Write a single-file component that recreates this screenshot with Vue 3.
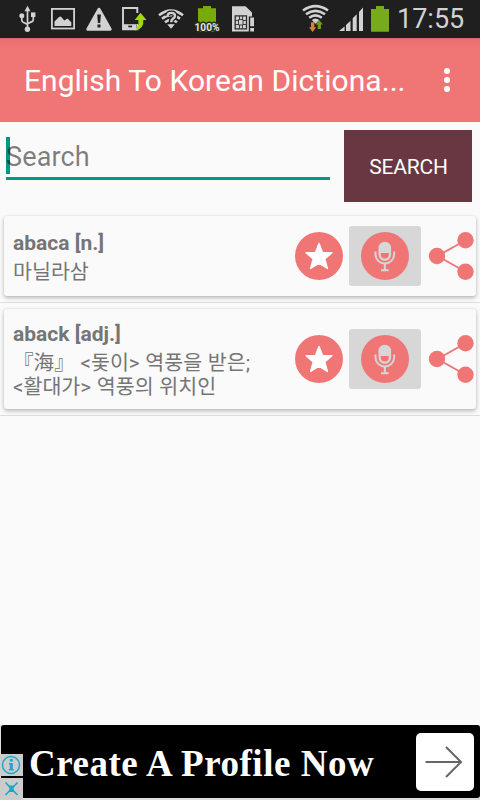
<template>
	<div class="screen">
		<header class="status">
			<div class="status-left">
				<svg width="36" height="38" viewBox="9 0 36 38">
					<g fill="none" stroke="#d2d2d2" stroke-width="1.7">
						<path d="M27.5 10v19M21.8 17v3.2q0 1.8 2 2.4l3.7 1.8M33.3 16v3.5q0 1.8-2 2.4l-3.8 1.9" />
					</g>
					<g fill="#d2d2d2">
						<path d="M27.5 5.8l3 5.4h-6z" />
						<circle cx="21.8" cy="15.8" r="2.5" />
						<rect x="31" y="12.4" width="4.4" height="4.6" />
						<circle cx="27.4" cy="29.2" r="2.7" />
					</g>
				</svg>
				<svg width="36" height="38" viewBox="45 0 36 38">
					<rect x="51.9" y="8.9" width="22.2" height="19.6" fill="none" stroke="#d2d2d2" stroke-width="1.8" />
					<path d="M54.5 26v-4.500l4.500-4.600 1.800-.5 3.500 4 3.200-2 3.800 3.800v3.800z" fill="#d2d2d2" />
				</svg>
				<svg width="36" height="38" viewBox="81 0 36 38">
					<path d="M99 9.200L110.200 29.200H87.800z" fill="#d2d2d2" stroke="#d2d2d2" stroke-width="3" stroke-linejoin="round" />
					<path d="M97.200 14.500h3.700l-.7 8.500h-2.300zM97.500 24.600h3v2.900h-3z" fill="#1f1f1f" />
				</svg>
				<svg width="36" height="38" viewBox="117 0 36 38">
					<path d="M137.300 13V8H123v21.200h14.300V24" fill="none" stroke="#d2d2d2" stroke-width="1.9" />
					<path d="M123 24.200h13v5.300h-13z" fill="#d2d2d2" />
					<path d="M128.300 25.600h3.800v1.700h-3.800z" fill="#1f1f1f" />
					<path d="M140.500 12.800l6 7.200h-3.200q1 9-8.500 10.800 4.600-3.800 3.500-10.800h-3.600z" fill="#a1d900" />
				</svg>
				<svg width="36" height="38" viewBox="153 0 36 38">
					<g fill="none" stroke="#d2d2d2" stroke-width="2.600">
						<path d="M159 15.300Q171 6 183 15.300" />
						<path d="M162 18.800Q171 11.500 180 18.800" />
						<path d="M165 22.200Q171 17.500 177 22.200" />
					</g>
					<path d="M167.200 24.200h7.600L171 28.700z" fill="#d2d2d2" />
					<path d="M167.500 16q.2-3.100 3.800-3.100 3.700 0 3.700 2.800 0 1.700-2 2.900-1.800 1.100-1.800 3.100v1" fill="none" stroke="#1f1f1f" stroke-width="4.800" />
					<path d="M167.500 16.200q.2-3.300 3.800-3.300 3.700 0 3.700 2.800 0 1.700-2 2.900-1.800 1.100-1.800 3.700M171.200 24.400v2.900" fill="none" stroke="#d2d2d2" stroke-width="2.400" />
				</svg>
				<svg width="36" height="38" viewBox="189 0 36 38">
					<path d="M203 6h8v2.300h5V31.700h-18V8.300h5z" fill="#77aa0a" />
					<text class="percent" x="207" y="31" text-anchor="middle" textLength="25" lengthAdjust="spacingAndGlyphs">100%</text>
				</svg>
				<svg width="36" height="38" viewBox="225 0 36 38">
					<path d="M232 6.200h13.500l6.500 6.300v4h-3.200v15H232z" fill="#d2d2d2" />
					<rect x="235.200" y="15.900" width="11.300" height="13" fill="none" stroke="#2e2e2e" stroke-width="1.300" />
					<path d="M238.500 19.500h4.500v5.500h-4.500zM235 20.500h3.500M235 24.500h3.500M243 20.500h3.500M243 24.500h3.500M239.500 16v3.500M242.500 16v3.500M239.500 25v3.500M242.500 25v3.500" fill="none" stroke="#2e2e2e" stroke-width=".9" />
					<path d="M250.200 17.500h3.800v8.800h-3.800zM250.200 28h3.800v3.500h-3.800z" fill="#d2d2d2" />
				</svg>
			</div>
			<div class="status-right">
				<svg width="27" height="38" viewBox="302 0 27 38">
					<g fill="none" stroke="#d2d2d2" stroke-width="2.600">
						<path d="M303 10.500Q315.500 1.800 328 10.500" />
						<path d="M306 14.300Q315.500 7.400 325 14.300" />
						<path d="M309.200 17.700Q315.500 13 321.800 17.700" />
					</g>
					<path d="M311.800 20Q315.500 17 319.200 20L315.500 23.700z" fill="#d2d2d2" />
					<path d="M311 22.200h3.300v5h1.900L312.600 32 309 27.200h2z" fill="#d58334" />
					<path d="M317.700 29h3.200v-4.500h1.900L319.300 20l-3.700 4.500h2.100z" fill="#6fa011" />
				</svg>
				<svg width="24" height="38" viewBox="338 0 24 38">
					<path d="M339 31l5.600-4.600V31zM346 25l4.500-4.300V31H346zM352.700 18.300l4-4V31h-4zM359 12l4-4.500V31h-4z" fill="#d2d2d2" />
				</svg>
				<svg width="18" height="38" viewBox="371 0 18 38">
					<path d="M376 6h8v3h5v22.700h-18V9h5z" fill="#77aa1c" />
				</svg>
				<span class="time">17:55</span>
			</div>
		</header>

		<div class="toolbar">
			<h1>English To Korean Dictiona...</h1>
			<div class="more"><i></i><i></i><i></i></div>
		</div>

		<div class="search">
			<div class="field">
				<span class="caret"></span>
				<span class="hint">Search</span>
			</div>
			<button class="submit" type="button">SEARCH</button>
		</div>

		<main class="list">
			<div v-for="entry in entries" :key="entry.word" class="row">
				<div class="card">
					<div class="entry">
						<div class="word">{{ entry.word }}</div>
						<div class="meaning">
							<div v-for="line in entry.lines" :key="line">{{ line }}</div>
						</div>
					</div>
					<svg class="star" width="48" height="48" viewBox="0 0 48 48">
						<circle cx="24" cy="24" r="24" fill="#f07676" />
						<path d="M24 11.500l3.500 8.900 9.400.3-7.200 6.200 2.700 9.500-8.400-5.300-8.400 5.300 2.700-9.500-7.200-6.200 9.400-.3z" fill="#fff" stroke="#fff" stroke-width="1.500" stroke-linejoin="round" />
					</svg>
					<div class="mic">
						<svg width="48" height="48" viewBox="0 0 48 48">
							<circle cx="24" cy="24" r="24" fill="#f07676" />
							<path d="M17.500 16a6.300 6.300 0 0 1 12.600 0v6.500a6.300 6.300 0 0 1-12.600 0z" fill="#d6d7d6" />
							<path d="M19.800 21h8v1.500a4 4 0 0 1-8 0z" fill="#f07676" />
							<path d="M14.500 19.500v3a9.300 9 0 0 0 18.600 0v-3" fill="none" stroke="#d6d7d6" stroke-width="2" />
							<path d="M23.800 31.500v6M20 38.200h7.600" fill="none" stroke="#d6d7d6" stroke-width="2" />
						</svg>
					</div>
					<svg class="share" width="46" height="48" viewBox="0 0 46 48">
						<path d="M37 8L8.500 24 37 40" fill="none" stroke="#f07676" stroke-width="1.900" />
						<g fill="#f07676">
							<circle cx="8" cy="24" r="8.200" />
							<circle cx="36.500" cy="8.200" r="8.200" />
							<circle cx="36.500" cy="39.800" r="8.200" />
						</g>
					</svg>
				</div>
			</div>
		</main>

		<footer class="ad">
			<div class="banner">
				<span class="slogan">Create A Profile Now</span>
				<div class="go">
					<svg width="58" height="58" viewBox="0 0 58 58">
						<path d="M9.500 29H44M30 14l15 15-15 15" fill="none" stroke="#666" stroke-width="2" />
					</svg>
				</div>
			</div>
			<div class="badges">
				<svg width="23" height="22" viewBox="0 0 23 22">
					<circle cx="11" cy="11" r="8.500" fill="none" stroke="#19abc6" stroke-width="1.500" />
					<path d="M9.800 5h3v2.500h-3zM9 9h3.800v6h1v1.500H8.800V15h1v-4.500H9z" fill="#19abc6" />
				</svg>
				<svg width="23" height="22" viewBox="0 0 23 22">
					<path d="M5.500 4.500l12 12.500M17.500 4.500l-12 12.500" stroke="#19abc6" stroke-width="1.600" />
					<path d="M8.500 7.500h6l-1 3.200 1 3.300h-6l1-3.300z" fill="#19abc6" />
				</svg>
			</div>
		</footer>
	</div>
</template>

<script setup>
	const entries = [
		{ word: 'abaca [n.]', lines: ['마닐라삼'] },
		{ word: 'aback [adj.]', lines: ['『海』 <돛이> 역풍을 받은;', '<활대가> 역풍의 위치인'] },
	]
</script>

<style>
	body {
		margin: 0;
		background: #fafafa;
	}
</style>

<style scoped>
	.screen {
		display: flex;
		flex-direction: column;
		width: 480px;
		height: 800px;
		overflow: hidden;
		background: #fafafa;
		font-family: Roboto, 'Noto Sans CJK KR', sans-serif;
	}

	svg {
		display: block;
		flex: none;
		overflow: visible;
	}

	.status {
		display: flex;
		justify-content: space-between;
		height: 38px;
		padding: 0 16px 0 9px;
		background: #1f1f1f;
	}

	.status-left {
		display: flex;
	}

	.status-right {
		display: flex;
		width: 162px;
	}

	.status-right svg + svg {
		margin-left: 9px;
	}

	.percent {
		font: bold 11px Roboto, sans-serif;
		fill: #e4e4e4;
		stroke: #252b16;
		stroke-width: 3px;
		paint-order: stroke;
	}

	.time {
		flex: none;
		margin-left: 8px;
		font-size: 27px;
		line-height: 38px;
		color: #d2d2d2;
		white-space: nowrap;
	}

	.toolbar {
		display: flex;
		align-items: center;
		justify-content: space-between;
		height: 84px;
		padding: 0 30px 0 24px;
		background: linear-gradient(#d66767, #e97070 2px, #f07676 12px);
		color: #fff;
	}

	.toolbar h1 {
		margin: 0;
		padding-top: 1px;
		font-size: 30px;
		font-weight: 400;
		line-height: 36px;
		letter-spacing: 0.05px;
		white-space: nowrap;
	}

	.more {
		display: flex;
		flex-direction: column;
		gap: 3px;
	}

	.more i {
		width: 6px;
		height: 6px;
		border-radius: 50%;
		background: #fff;
	}

	.search {
		display: flex;
		justify-content: space-between;
		height: 94px;
		padding: 8px 8px 0 6px;
		box-sizing: border-box;
	}

	.field {
		display: flex;
		width: 324px;
		height: 50px;
		padding-top: 7px;
		box-sizing: border-box;
		border-bottom: 3px solid #009688;
	}

	.caret {
		width: 4px;
		height: 37px;
		margin-right: -4px;
		background: #009688;
	}

	.hint {
		position: relative;
		font-size: 27px;
		line-height: 41px;
		letter-spacing: 0.15px;
		color: rgba(0, 0, 0, 0.5);
	}

	.submit {
		width: 128px;
		height: 72px;
		padding: 2px 0 0 1px;
		border: 0;
		background: #683742;
		color: #fff;
		font: 21px Roboto, sans-serif;
		letter-spacing: -0.2px;
	}

	.row {
		padding: 0 4px 6px;
		border-bottom: 1px solid #dcdcdc;
	}

	.row + .row {
		padding-top: 6px;
	}

	.card {
		display: flex;
		align-items: center;
		min-height: 80px;
		padding-left: 9px;
		box-sizing: border-box;
		border-radius: 3px;
		background: #fafafa;
		box-shadow: 0 2px 4px rgba(0, 0, 0, 0.26), 0 0 2px rgba(0, 0, 0, 0.1);
	}

	.row + .row .card {
		min-height: 100px;
	}

	.entry {
		width: 282px;
		color: #757575;
		white-space: nowrap;
	}

	.word {
		font-size: 21px;
		font-weight: 700;
		line-height: 26px;
	}

	.meaning {
		margin-bottom: -1px;
		padding-top: 4px;
		font-size: 20.6px;
		line-height: 24px;
		word-spacing: 0.6px;
	}

	.mic {
		display: flex;
		align-items: center;
		justify-content: center;
		width: 72px;
		height: 60px;
		margin: 0 8px 0 6px;
		border-radius: 3px;
		background: #d6d7d6;
	}

	.ad {
		position: relative;
		height: 75px;
		margin-top: auto;
		padding-left: 1px;
		background: #dedede;
	}

	.banner {
		display: flex;
		align-items: center;
		justify-content: space-between;
		height: 73px;
		padding: 0 6px 0 28px;
		box-sizing: border-box;
		border-radius: 3px;
		background: #000;
	}

	.slogan {
		padding-top: 3px;
		color: #fff;
		font: bold 37px 'Liberation Serif', serif;
		letter-spacing: 0.53px;
		white-space: nowrap;
	}

	.go {
		width: 58px;
		height: 58px;
		border-radius: 5px;
		background: #fff;
	}

	/* ad choices markers sit over the banner corner */
	.badges {
		position: absolute;
		left: 0;
		bottom: 0;
		display: flex;
		flex-direction: column;
		gap: 2px;
	}

	.badges svg {
		background: #ccc;
	}
</style>
